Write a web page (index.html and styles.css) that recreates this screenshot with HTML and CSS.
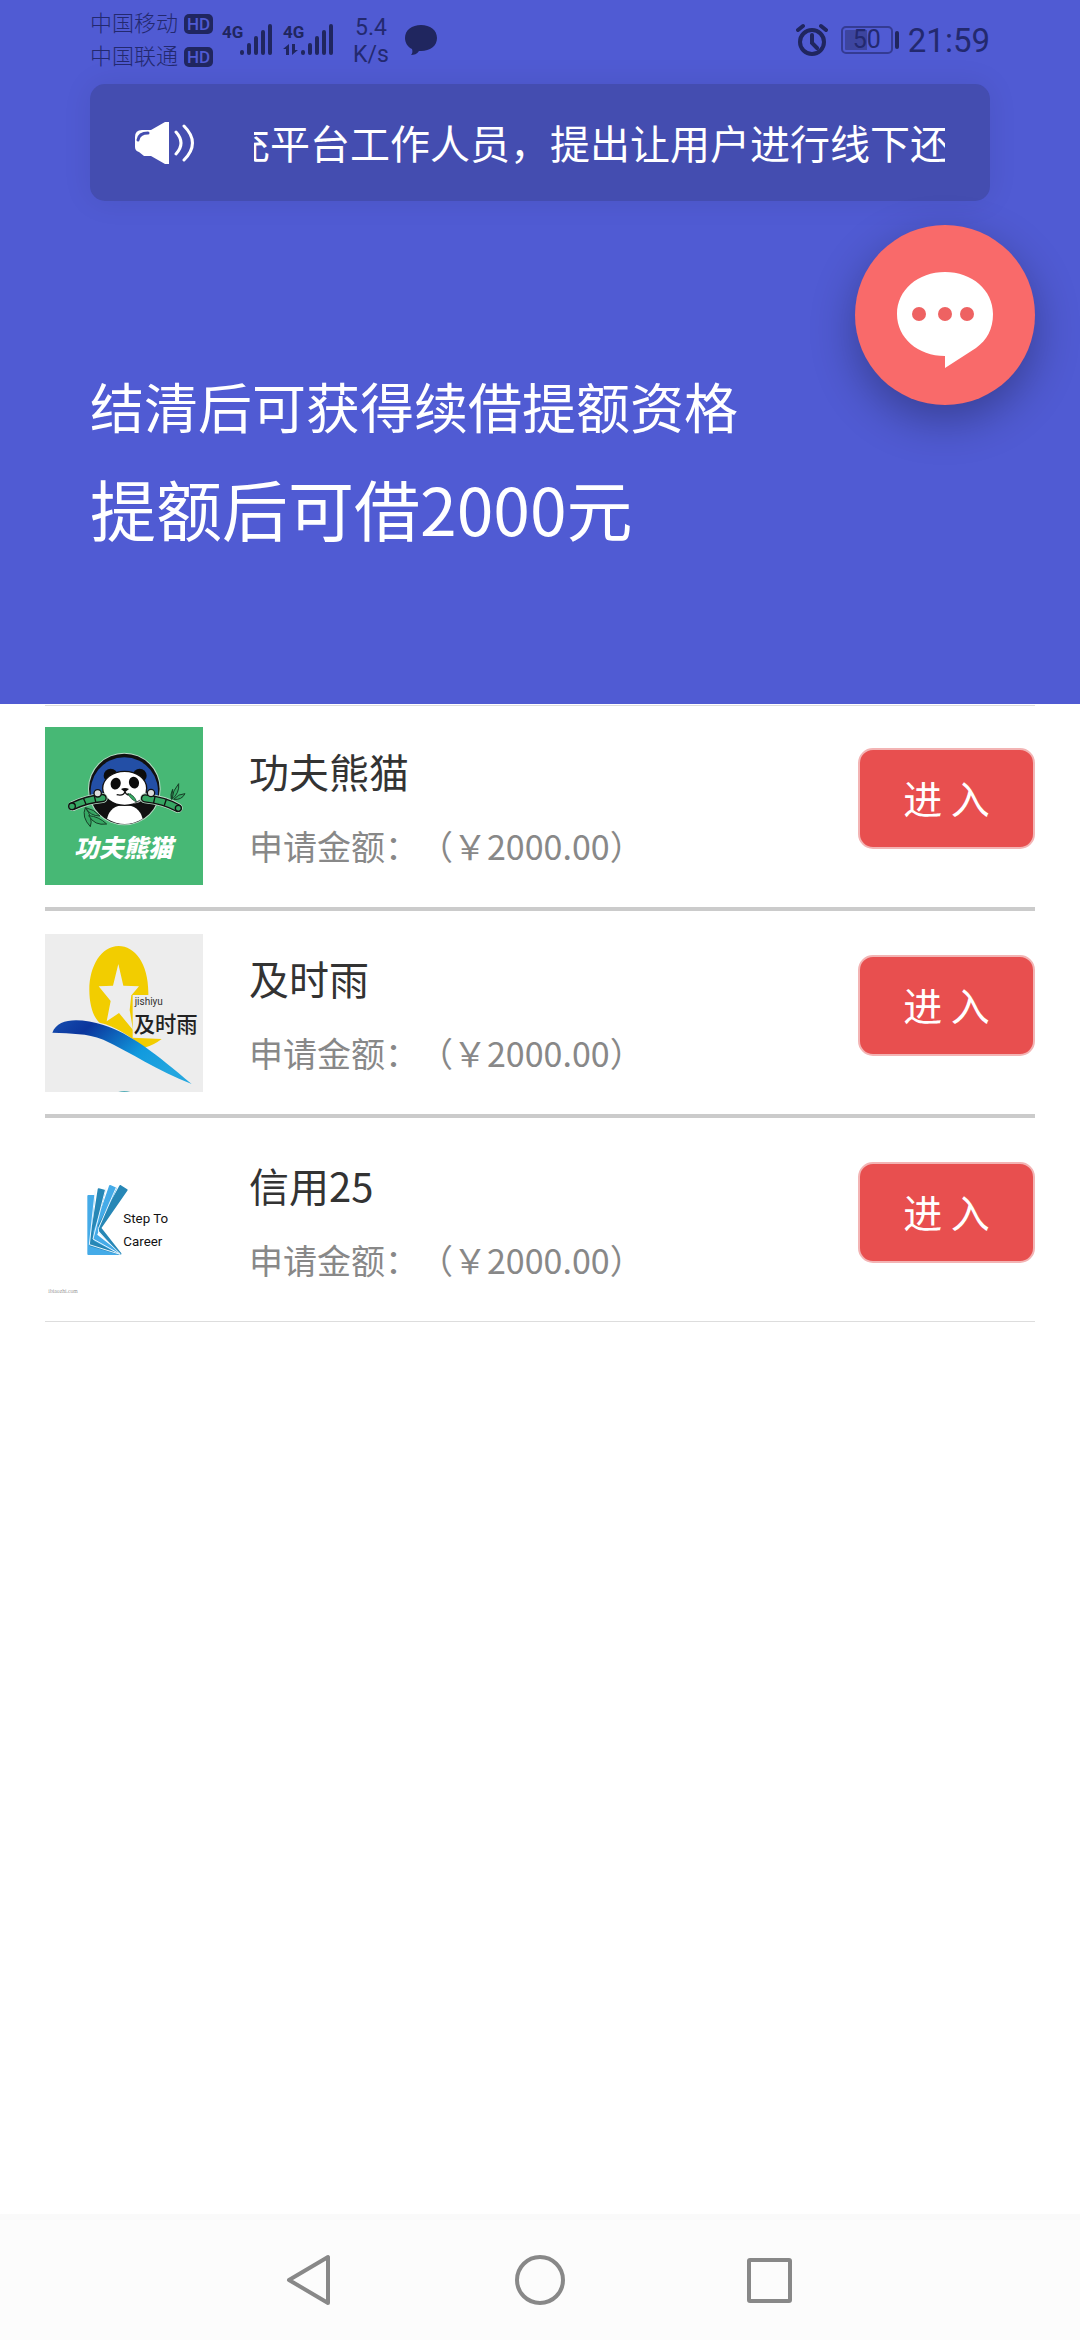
FILE: index.html
```html
<!DOCTYPE html>
<html lang="zh-CN">
<head>
  <meta charset="UTF-8">
  <meta name="viewport" content="width=device-width, initial-scale=1">
  <title>提额</title>
  <link rel="stylesheet" href="styles.css">
</head>
<body>
  <header class="hero">
    <div class="status-bar">
      <div class="carriers">
        <div class="carrier">中国移动 <span class="hd">HD</span></div>
        <div class="carrier">中国联通 <span class="hd">HD</span></div>
      </div>
      <svg class="signal" width="52" height="34" viewBox="0 0 52 34">
        <text x="0" y="15">4G</text>
        <g class="bars">
          <path d="M20 29v1M27 22v8M34 15v15M41 9v21M48 3v27"/>
        </g>
      </svg>
      <svg class="signal" width="52" height="34" viewBox="0 0 52 34">
        <text x="0" y="15">4G</text>
        <path d="M0 26l6-5v11H3v-6zM9 21v11l6-5h-3v-6z"/>
        <g class="bars">
          <path d="M20 29v1M27 22v8M34 15v15M41 9v21M48 3v27"/>
        </g>
      </svg>
      <div class="speed">5.4<br>K/s</div>
      <svg class="msg" width="32" height="32" viewBox="0 0 32 32">
        <path d="M16 1c9 0 16 5 16 13s-7 13-16 13h-2c-2 3-5 4-8 4 1-1 2-3 1-6C3 23 0 19 0 14 0 6 7 1 16 1z"/>
      </svg>
      <svg class="alarm" width="32" height="34" viewBox="0 0 32 34">
        <circle cx="16" cy="19" r="12"/>
        <path d="M16 12v8l5 5M2 7l5-4M30 7l-5-4"/>
      </svg>
      <div class="battery"><span>50</span></div>
      <time class="clock">21:59</time>
    </div>

    <div class="notice">
      <svg class="speaker" width="60" height="42" viewBox="0 0 60 42">
        <path d="M0 15q0-7 7-7h9L30 0h4v42h-4L16 34H9l-5-4q-4-1-4-5z" fill="#fff"/>
        <path d="M41 10q10 11 0 22M49 4q17 17 0 34" fill="none" stroke="#fff" stroke-linecap="round"/>
        <path d="M3 18q1-7 10-7" fill="none" stroke="#444db0" stroke-linecap="round"/>
      </svg>
      <div class="marquee">充平台工作人员，提出让用户进行线下还</div>
    </div>

    <div class="intro">
      <h2>结清后可获得续借提额资格</h2>
      <h1>提额后可借2000元</h1>
    </div>

    <button class="chat-btn" type="button" aria-label="客服">
      <svg width="96" height="96" viewBox="0 0 96 96">
        <path d="M48 0c27 0 48 18 48 42 0 15-6 26-17 34L48 96V84C21 84 0 66 0 42S21 0 48 0z" fill="#fff"/>
        <circle cx="22" cy="42" r="7"/>
        <circle cx="48" cy="42" r="7"/>
        <circle cx="70" cy="42" r="7"/>
      </svg>
    </button>
  </header>

  <main>
    <ul class="loan-list">
      <li class="loan">
        <svg class="logo" viewBox="0 0 474 474">
          <rect width="474" height="474" fill="#47b875"/>
          <circle cx="238" cy="186" r="109" fill="#b9dcc6"/>
          <circle cx="238" cy="186" r="106" fill="#111"/>
          <path d="M139 212a101 101 0 1 1 198 0z" fill="#234fa6"/>
          <path d="M186 275q10-40 53-40t54 40q-54 32-107 0z" fill="#fff"/>
          <g fill="#0c0c0c">
            <circle cx="197" cy="146" r="21"/>
            <circle cx="284" cy="146" r="21"/>
          </g>
          <ellipse cx="239" cy="184" rx="66" ry="51" fill="#fff" stroke="#111" stroke-width="4"/>
          <path d="M262 231q40-12 41-50 4 46-41 50z" fill="#bbb"/>
          <g fill="#0c0c0c">
            <ellipse cx="212" cy="170" rx="15" ry="18" transform="rotate(18 212 170)"/>
            <ellipse cx="267" cy="167" rx="15" ry="18" transform="rotate(-18 267 167)"/>
            <path d="M228 186q12-6 24 0l-12 10z"/>
          </g>
          <path d="M240 194q-4 14-25 9M240 194q5 14 18 7" fill="none" stroke="#111" stroke-width="4"/>
          <path d="M248 199q20 4 27 26-18-7-27-26z" fill="#36a763" stroke="#173e27" stroke-width="2"/>
          <g fill="none" stroke-linecap="round">
            <path d="M84 237q42-20 89-24M300 214q58 6 98 29" stroke="#b9dcc6" stroke-width="30"/>
            <path d="M84 237q42-20 89-24M300 214q58 6 98 29" stroke="#111" stroke-width="25"/>
            <path d="M84 237q42-20 89-24M300 214q58 6 98 29" stroke="#36a763" stroke-width="17"/>
            <path d="M116 215l7 17M148 207l4 17M330 209l-4 18M364 217l-6 18" stroke="#111" stroke-width="4"/>
          </g>
          <g fill="#36a763" stroke="#111" stroke-width="4">
            <circle cx="81" cy="238" r="10"/>
            <circle cx="400" cy="244" r="9"/>
          </g>
          <g fill="#ddd" stroke="#111" stroke-width="4">
            <circle cx="158" cy="199" r="11"/>
            <circle cx="318" cy="198" r="11"/>
          </g>
          <g fill="#36a763" stroke="#173e27" stroke-width="3">
            <path d="M121 242q-12 28 15 57 9-26-15-57z"/>
            <path d="M122 242q24 4 43 25-30 0-43-25z"/>
            <path d="M131 266q30 2 54 25-36 6-54-25z"/>
            <path d="M381 217q1-26 20-47 3 28-20 47z"/>
            <path d="M386 217q14-17 34-17-10 20-34 17z"/>
            <path d="M379 217q-4-14 4-30z"/>
          </g>
          <text class="panda-name" x="235" y="391">功夫熊猫</text>
        </svg>
        <div class="info">
          <h3>功夫熊猫</h3>
          <p>申请金额：（￥2000.00）</p>
        </div>
        <button class="enter-btn" type="button">进 入</button>
      </li>

      <li class="loan">
        <svg class="logo" viewBox="0 0 474 474">
          <defs>
            <linearGradient id="wave" x1="0" y1="0" x2="1" y2="0.5">
              <stop offset="0" stop-color="#164eb0"/>
              <stop offset="0.25" stop-color="#0b359c"/>
              <stop offset="0.7" stop-color="#119ade"/>
              <stop offset="1" stop-color="#23a6df"/>
            </linearGradient>
          </defs>
          <rect width="474" height="474" fill="#ededed"/>
          <path d="M310 183C312 90 270 36 221 36 170 36 133 95 133 168c0 46 13 84 31 98 46 10 96 42 132 76q30-8 54-27l-87-4V183z" fill="#f2cd00"/>
          <path d="M220 90l15 65 47 2-22 26h-1l-5 45 10 60-42-51-37 25 12-61-36-44 43-2z" fill="#ededed"/>
          <path d="M22 296c18-48 88-43 153-23 82 26 157 86 265 177-104-40-182-95-265-133-52-20-94-18-153-21z" fill="url(#wave)"/>
          <path d="M220 474q18-6 36 0z" fill="#55aeb8"/>
          <text class="rain-latin" x="269" y="214">jishiyu</text>
          <text class="rain-name" x="266" y="295">及时雨</text>
        </svg>
        <div class="info">
          <h3>及时雨</h3>
          <p>申请金额：（￥2000.00）</p>
        </div>
        <button class="enter-btn" type="button">进 入</button>
      </li>

      <li class="loan">
        <svg class="logo" viewBox="0 0 474 474">
          <g stroke-linejoin="round" stroke-width="6">
            <path d="M130 165h17l-14 150 93 24h-96z" fill="#45abe8" stroke="#45abe8"/>
            <path d="M161 145l17 4-34 150 80 39-88-25 2-20z" fill="#2787b6" stroke="#2787b6"/>
            <path d="M195 135l17 7-59 140 72 56-76-41-1-25z" fill="#45abe8" stroke="#45abe8"/>
            <path d="M226 135l19 12-79 114 60 77-62-69-3-15z" fill="#2787b6" stroke="#2787b6"/>
          </g>
          <path d="M151 147l-18 164 92 29M183 140l-39 154 82 46M215 137l-55 126 1 12 66 65" fill="none" stroke="#e8f6ff" stroke-width="3"/>
          <text class="step-name" x="235" y="247">Step To</text>
          <text class="step-name" x="235" y="315">Career</text>
          <text class="step-site" x="10" y="456">ibiaozhi.com</text>
        </svg>
        <div class="info">
          <h3>信用25</h3>
          <p>申请金额：（￥2000.00）</p>
        </div>
        <button class="enter-btn" type="button">进 入</button>
      </li>
    </ul>
  </main>

  <nav class="nav-bar">
    <button type="button" aria-label="返回">
      <svg width="50" height="52" viewBox="0 0 50 52"><path d="M43 3v46L4 26z"/></svg>
    </button>
    <button type="button" aria-label="主页">
      <svg width="50" height="52" viewBox="0 0 50 52"><circle cx="25" cy="26" r="23"/></svg>
    </button>
    <button type="button" aria-label="最近任务">
      <svg width="50" height="52" viewBox="0 0 50 52"><rect x="4" y="6" width="41" height="41" rx="1"/></svg>
    </button>
  </nav>
</body>
</html>
```

FILE: styles.css
```css
* {
  box-sizing: border-box;
}
body {
  margin: 0;
  min-height: 100vh;
  display: flex;
  flex-direction: column;
  background: #fff;
  color: #333;
  font-family: "Noto Sans CJK SC", sans-serif;
  text-spacing-trim: space-all;
}
h1, h2, h3, p, ul {
  margin: 0;
  padding: 0;
  font-weight: 400;
}
button {
  padding: 0;
  border: none;
  font-family: inherit;
  cursor: pointer;
}
main {
  flex: 1;
}

/* top area */
.hero {
  position: relative;
  padding: 0 90px 157px;
  background: #505bd3;
  color: #fff;
}
.status-bar {
  display: flex;
  align-items: center;
  height: 84px;
  padding-bottom: 4px;
  color: #23296f;
  fill: #20265f;
  font-family: Roboto, "Noto Sans CJK SC", sans-serif;
}
.carrier {
  display: flex;
  align-items: center;
  gap: 6px;
  height: 33px;
  font-size: 22px;
  font-weight: 300;
  line-height: 30px;
}
.hd {
  width: 29px;
  border-radius: 5px;
  background: #20265f;
  color: #505bd3;
  font-size: 17px;
  font-weight: 500;
  line-height: 20px;
  text-align: center;
}
.signal {
  margin-left: 9px;
}
.signal text {
  font-size: 17px;
  font-weight: 700;
}
.bars {
  stroke: #20265f;
  stroke-width: 4;
  stroke-linecap: round;
}
.speed {
  margin: 0 16px 0 18px;
  padding-top: 2px;
  font-size: 23px;
  line-height: 27px;
  text-align: center;
}
.alarm {
  margin-left: auto;
  fill: none;
  stroke: #20265f;
  stroke-width: 4;
  stroke-linecap: round;
}
.battery {
  position: relative;
  width: 52px;
  height: 28px;
  margin: 0 15px 0 13px;
  padding: 2px;
  border: 2px solid #343b93;
  border-radius: 5px;
  background: linear-gradient(to right, #3d459f 50%, transparent 50%) content-box;
  font-size: 25px;
  line-height: 20px;
  text-align: center;
}
.battery::after {
  content: "";
  position: absolute;
  top: 3px;
  right: -8px;
  width: 4px;
  height: 18px;
  border-radius: 2px;
  background: #20265f;
}
.clock {
  font-size: 33px;
}

.notice {
  display: flex;
  align-items: center;
  height: 117px;
  padding: 0 45px;
  border-radius: 15px;
  background: #444db0;
  box-shadow: 0 0 30px rgba(0, 0, 0, 0.08);
}
.speaker {
  flex: none;
  stroke-width: 3;
}
.marquee {
  flex: 1;
  margin-left: 59px;
  padding-bottom: 2px;
  overflow: hidden;
  white-space: nowrap;
  text-indent: -24px;
  font-size: 40px;
  line-height: 60px;
}

.intro {
  padding-top: 165px;
}
.intro h2 {
  font-size: 54px;
  line-height: 80px;
}
.intro h1 {
  margin-top: 21px;
  font-size: 66px;
  line-height: 80px;
}

.chat-btn {
  position: absolute;
  top: 225px;
  right: 45px;
  display: flex;
  align-items: center;
  justify-content: center;
  width: 180px;
  height: 180px;
  padding-top: 10px;
  border-radius: 50%;
  background: #f96a6a;
  fill: #ee6262;
  box-shadow: 0 15px 45px rgba(0, 0, 0, 0.3);
}

/* loan list */
.loan-list {
  padding: 1px 45px 0;
  list-style: none;
}
.loan {
  display: flex;
  align-items: flex-start;
  padding: 23px 0 22px;
  border-bottom: 4px solid #cbcbcb;
}
.loan:first-child {
  padding-top: 21px;
  border-top: 1px solid #ddd;
}
.loan:last-child {
  border-bottom: 1px solid #ddd;
}
.logo {
  flex: none;
  width: 158px;
  height: 158px;
}
.info {
  flex: 1;
  margin-left: 46px;
}
.info h3 {
  padding-top: 14px;
  font-size: 40px;
  line-height: 60px;
}
.info p {
  padding-top: 20px;
  color: #888;
  font-size: 34px;
  line-height: 50px;
}
.enter-btn {
  width: 177px;
  height: 101px;
  margin-top: 21px;
  padding-bottom: 4px;
  border: 2px solid #f3b4b4;
  border-radius: 15px;
  background: #e84f4f;
  color: #fff;
  font-size: 39px;
}

.panda-name {
  fill: #fff;
  font-size: 74px;
  font-style: italic;
  font-weight: 900;
  text-anchor: middle;
}
.rain-latin {
  fill: #333;
  font-family: Roboto, sans-serif;
  font-size: 30px;
}
.rain-name {
  fill: #222;
  font-size: 64px;
  font-weight: 500;
}
.step-name {
  fill: #111;
  font-family: "Liberation Sans Narrow", Roboto, sans-serif;
  font-size: 40px;
}
.step-site {
  fill: #999;
  font-family: "Liberation Serif", serif;
  font-size: 17px;
}

/* system navigation */
.nav-bar {
  display: flex;
  align-items: center;
  justify-content: center;
  gap: 180px;
  height: 126px;
  border-top: 6px solid #fafafa;
  background: #fcfcfc;
}
.nav-bar button {
  display: flex;
  background: none;
}
.nav-bar svg {
  fill: none;
  stroke: #888;
  stroke-width: 4;
  stroke-linejoin: round;
}
```
